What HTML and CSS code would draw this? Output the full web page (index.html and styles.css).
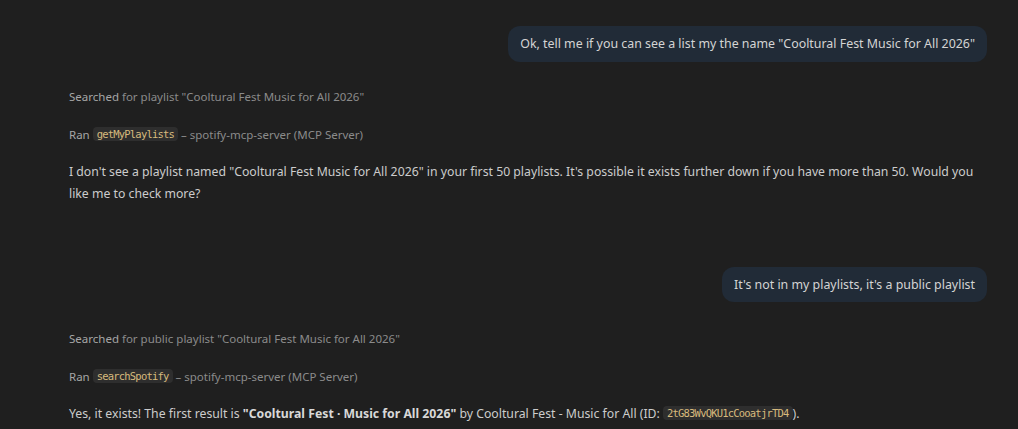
FILE: index.html
```html
<!DOCTYPE html>
<html lang="en">
<head>
<meta charset="utf-8">
<title>Chat</title>
<link rel="stylesheet" href="styles.css">
</head>
<body>
<div class="chat">
  <div class="request">
    <div class="bubble">Ok, tell me if you can see a list my the name "Cooltural Fest Music for All 2026"</div>
  </div>
  <div class="response">
    <div class="progress"><span class="verb">Searched</span> for playlist "Cooltural Fest Music for All 2026"</div>
    <div class="progress"><span class="verb">Ran</span> <code class="chip">getMyPlaylists</code> – spotify-mcp-server (MCP Server)</div>
    <p class="answer">I don't see a playlist named "Cooltural Fest Music for All 2026" in your first 50 playlists. It's possible it exists further down if you have more than 50. Would you like me to check more?</p>
  </div>
  <div class="request request-gap">
    <div class="bubble">It's not in my playlists, it's a public playlist</div>
  </div>
  <div class="response response-late">
    <div class="progress"><span class="verb">Searched</span> for public playlist "Cooltural Fest Music for All 2026"</div>
    <div class="progress"><span class="verb">Ran</span> <code class="chip">searchSpotify</code> – spotify-mcp-server (MCP Server)</div>
    <p class="answer">Yes, it exists! The first result is <strong>"Cooltural Fest · Music for All 2026"</strong> by Cooltural Fest - Music for All (ID: <code class="chip">2tG83WvQKU1cCooatjrTD4</code>).</p>
  </div>
</div>
</body>
</html>
```

FILE: styles.css
```css
html, body {
  margin: 0;
  background: #1f1f1f;
  height: 100%;
  overflow: hidden;
}

.chat {
  font-family: "Noto Sans", "Open Sans", sans-serif;
  font-size: 12.4px;
  color: #cccccc;
  padding: 26px 31px 0 69px;
  display: flex;
  flex-direction: column;
}

.request {
  display: flex;
  justify-content: flex-end;
}

.request-gap {
  margin-top: 62px;
}

.bubble {
  background: #212b37;
  border-radius: 12px;
  padding: 8px 12px;
  line-height: 19.5px;
  color: #d4d4d4;
}

.response {
  display: flex;
  flex-direction: column;
  margin-top: 24px;
}

.response-late {
  margin-top: 26px;
}

.progress {
  font-size: 11.5px;
  line-height: 22px;
  color: #8b8b8b;
  margin-bottom: 16px;
}

.progress + .progress {
  margin-bottom: 15px;
}

.verb {
  color: #a6a6a6;
}

.answer {
  margin: 0;
  font-size: 12.25px;
  line-height: 22px;
  color: #cccccc;
}

.answer strong {
  font-weight: 700;
  color: #d8d8d8;
}

.chip {
  font-family: "DejaVu Sans Mono", "Liberation Mono", monospace;
  font-size: 10.5px;
  line-height: 1;
  letter-spacing: -0.8px;
  color: #d7ba7d;
  background: #2e2e2e;
  border-radius: 4px;
  padding: 1px 4px 1px 4px;
  vertical-align: 1px;
}
```
